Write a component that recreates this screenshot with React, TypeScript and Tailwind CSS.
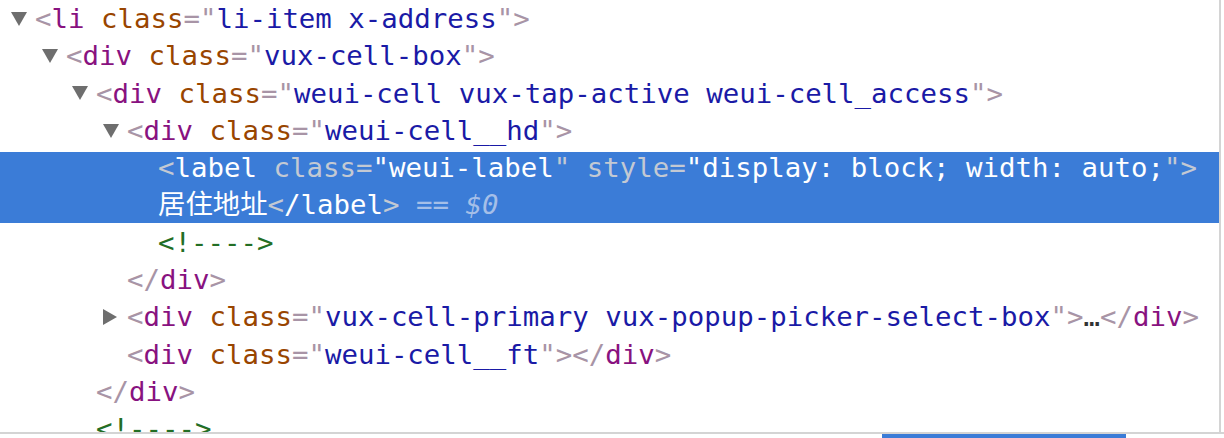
import React from 'react';

const mono = 'font-["DejaVu_Sans_Mono","Noto_Sans_CJK_SC",monospace]';

function Down() {
  return (
    <svg width="16" height="14" viewBox="0 0 16 14" className="shrink-0">
      <polygon points="0,0 16,0 8,14" fill="#6e6e6e" />
    </svg>
  );
}

function Right() {
  return (
    <svg width="14" height="16" viewBox="0 0 14 16" className="shrink-0">
      <polygon points="0,0 14,8 0,16" fill="#6e6e6e" />
    </svg>
  );
}

// token colours as in the devtools elements tree
const B = ({ children }: { children: React.ReactNode }) => <span className="text-[#a894a6]">{children}</span>;
const N = ({ children }: { children: React.ReactNode }) => <span className="text-[#881280]">{children}</span>;
const A = ({ children }: { children: React.ReactNode }) => <span className="text-[#994500]">{children}</span>;
const V = ({ children }: { children: React.ReactNode }) => <span className="text-[#1a1aa6]">{children}</span>;

function Row({ pad, arrow, children }: { pad: string; arrow?: 'down' | 'right'; children: React.ReactNode }) {
  return (
    <div className={`flex items-center h-[37.3px] whitespace-pre ${pad}`}>
      <div className="w-[24px] flex items-center">
        {arrow === 'down' && <Down />}
        {arrow === 'right' && <Right />}
      </div>
      <div>{children}</div>
    </div>
  );
}

function Open({ tag, cls }: { tag: string; cls: string }) {
  return (
    <>
      <B>&lt;</B>
      <N>{tag}</N> <A>class</A>
      <B>="</B>
      <V>{cls}</V>
      <B>"&gt;</B>
    </>
  );
}

export default function App() {
  return (
    <div className={`w-[1224px] h-[438px] bg-white overflow-hidden ${mono} text-[27.4px] leading-[37.3px]`}>
      <div className="w-[1221px] h-[432px] border-r-2 border-[#d4d4d4] overflow-hidden">
        <Row pad="pl-[11px]" arrow="down">
          <Open tag="li" cls="li-item x-address" />
        </Row>
        <Row pad="pl-[42px]" arrow="down">
          <Open tag="div" cls="vux-cell-box" />
        </Row>
        <Row pad="pl-[72px]" arrow="down">
          <Open tag="div" cls="weui-cell vux-tap-active weui-cell_access" />
        </Row>
        <Row pad="pl-[103px]" arrow="down">
          <Open tag="div" cls="weui-cell__hd" />
        </Row>

        {/* selected node */}
        <div className="h-[74.6px] pt-[3px]">
          <div className="h-[71px] bg-[#3b7cd7] flex flex-col">
            <div className="-mt-[3px] pl-[158px] whitespace-pre text-white">
              <div className="h-[37.3px]">
                <span className="text-[#c3c9d3]">&lt;</span>
                <span>label</span> <span className="text-[#c3c9d3]">class=</span>
                <span>"weui-label</span>
                <span className="text-[#c3c9d3]">"</span> <span className="text-[#c3c9d3]">style=</span>
                <span>"display: block; width: auto;</span>
                <span className="text-[#c3c9d3]">"&gt;</span>
              </div>
              <div className="h-[37.3px]">
                <span>居住地址</span>
                <span className="text-[#c3c9d3]">&lt;</span>
                <span>/label</span>
                <span className="text-[#c3c9d3]">&gt;</span>
                <span className="text-[#a5bfe8]"> == </span>
                <span className="text-[#a5bfe8] italic">$0</span>
              </div>
            </div>
          </div>
        </div>

        <Row pad="pl-[134px]">
          <span className="text-[#236e25]">&lt;!----&gt;</span>
        </Row>
        <Row pad="pl-[103px]">
          <B>&lt;/</B>
          <N>div</N>
          <B>&gt;</B>
        </Row>
        <Row pad="pl-[103px]" arrow="right">
          <Open tag="div" cls="vux-cell-primary vux-popup-picker-select-box" />
          <span className="text-[#333]">…</span>
          <B>&lt;/</B>
          <N>div</N>
          <B>&gt;</B>
        </Row>
        <Row pad="pl-[103px]">
          <Open tag="div" cls="weui-cell__ft" />
          <B>&lt;/</B>
          <N>div</N>
          <B>&gt;</B>
        </Row>
        <Row pad="pl-[72px]">
          <B>&lt;/</B>
          <N>div</N>
          <B>&gt;</B>
        </Row>
        <Row pad="pl-[72px]">
          <span className="text-[#236e25]">&lt;!----&gt;</span>
        </Row>
      </div>
      <div className="h-[6px] border-t-2 border-[#d4d4d4]">
        <div className="ml-[882px] w-[244px] h-[4px] bg-[#3b7cd7]" />
      </div>
    </div>
  );
}
